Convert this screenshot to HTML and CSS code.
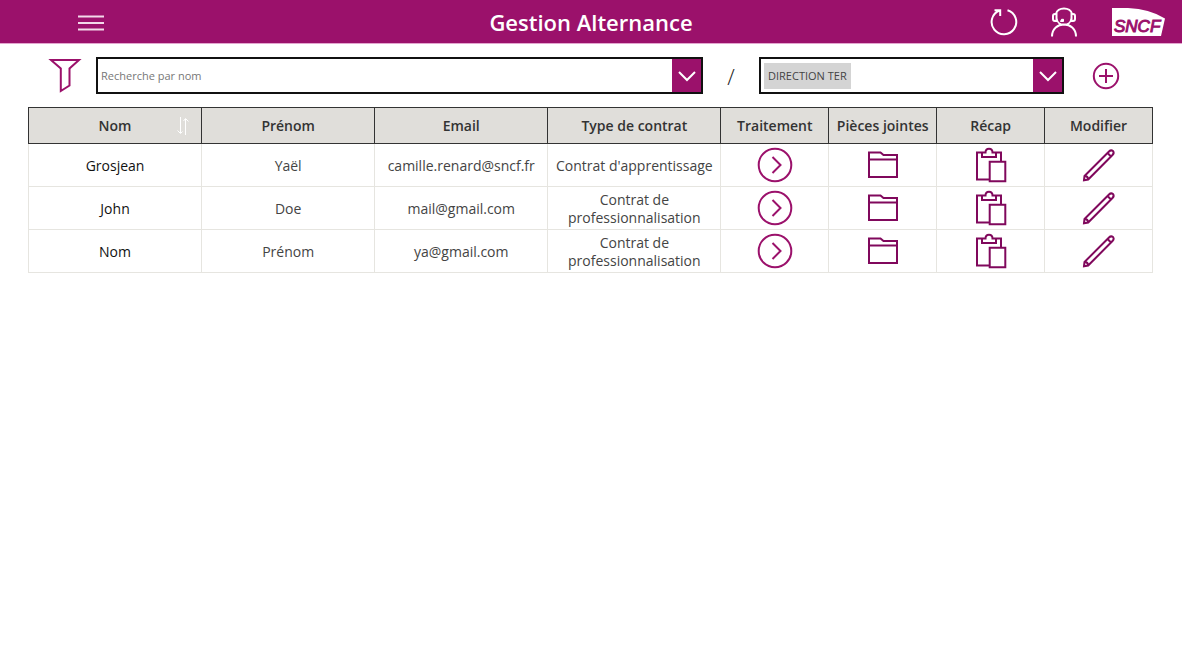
FILE: index.html
```html
<!DOCTYPE html>
<html lang="fr">
<head>
<meta charset="utf-8">
<meta name="viewport" content="width=device-width, initial-scale=1">
<title>Gestion Alternance</title>
<link rel="stylesheet" href="styles.css">
</head>
<body>
<svg class="sprite" aria-hidden="true">
  <symbol id="i-next" viewBox="0 0 36 36"><circle cx="18" cy="18" r="16.3"/><path d="M15.500 10l8 8-8 8"/></symbol>
  <symbol id="i-folder" viewBox="0 0 32 28"><path d="M2 26V1.500H13.500L16.500 4H30V26ZM2 8.500H30"/></symbol>
  <symbol id="i-recap" viewBox="0 0 32 36"><path d="M14.500 32.500H2V5.500H7M21 5.500H26V14.500M7 5.500V10H21V5.500H17.500C17.500 .5 10.500 .5 10.500 5.500ZM14.700 14.700H30.300V34.300H14.700Z"/></symbol>
  <symbol id="i-edit" viewBox="0 0 34 34"><path d="M2 32.200L2.500 28 27 3.500Q29 1.500 31 3 32.500 5 30.500 7L6.200 31.500ZM2.500 28Q6 28 6.200 31.500M25.500 5L29 8.500"/></symbol>
</svg>

<header class="topbar">
  <div class="topbar-start">
    <button class="icon-btn" type="button" aria-label="Menu">
      <svg class="bars" width="26" height="16" viewBox="0 0 26 16"><path d="M0 1.500H26M0 8H26M0 14.500H26"/></svg>
    </button>
  </div>
  <h1 class="title">Gestion Alternance</h1>
  <div class="topbar-end">
    <button class="icon-btn" type="button" aria-label="Actualiser">
      <svg width="28" height="28" viewBox="0 0 28 28"><path d="M17.500 2.200A12.300 12.300 0 1 1 9.500 2.500M4.500 2.300H10.200V8"/></svg>
    </button>
    <button class="icon-btn" type="button" aria-label="Assistance">
      <svg width="28" height="30" viewBox="0 0 28 30"><path d="M2 29.500C2 13.500 26 13.500 26 29.500M6.500 7H5Q3 7 3 9V12Q3 14 5 14H6.500ZM21.500 7H23Q25 7 25 9V12Q25 14 23 14H21.500ZM6 7C7-.5 21-.5 22 7M6.500 11C7.500 20 20.500 20 21.500 11"/><path class="solid" d="M10.500 14.500L11.500 12.300H13.500V14.500Z"/></svg>
    </button>
    <svg class="logo" width="53" height="28" viewBox="0 0 53 28" role="img" aria-label="SNCF"><path class="logo-plate" d="M0 0H16Q38 1 53 10.500L49 28H0Z"/><text class="logo-text" x="2" y="24">SNCF</text></svg>
  </div>
</header>

<main>
  <form class="toolbar">
    <svg class="funnel" width="34" height="36" viewBox="0 0 34 36" aria-hidden="true"><path d="M3 2H31L21.500 10.500V27.500L12.800 33V10.500Z"/></svg>
    <div class="combo combo-search">
      <input class="field" type="text" placeholder="Recherche par nom" aria-label="Recherche par nom">
      <button class="arrow" type="button" aria-label="Ouvrir la liste des noms"><svg width="20" height="12" viewBox="0 0 20 12"><path d="M2 2L10 10 18 2"/></svg></button>
    </div>
    <span class="slash">/</span>
    <div class="combo combo-direction">
      <select class="field direction" aria-label="Direction"><option>DIRECTION TER</option></select>
      <span class="arrow"><svg width="20" height="12" viewBox="0 0 20 12"><path d="M2 2L10 10 18 2"/></svg></span>
    </div>
    <button class="icon-btn add" type="button" aria-label="Ajouter">
      <svg width="28" height="28" viewBox="0 0 28 28"><circle cx="14" cy="14" r="12.200"/><path d="M14 7V21M7 14H21"/></svg>
    </button>
  </form>

  <table class="grid">
    <colgroup><col class="wide" span="4"><col class="narrow" span="4"></colgroup>
    <thead>
      <tr>
        <th scope="col"><div class="sortable"><span>Nom</span><button class="icon-btn sort" type="button" aria-label="Trier par nom"><svg width="12" height="18" viewBox="0 0 12 18"><path d="M3.500 0V16M.5 13.500L3.500 16.500 5.500 14.500M8.500 18V2M6.500 4L8.500 1.500 11.500 4.500"/></svg></button></div></th>
        <th scope="col">Prénom</th>
        <th scope="col">Email</th>
        <th scope="col">Type de contrat</th>
        <th scope="col">Traitement</th>
        <th scope="col">Pièces jointes</th>
        <th scope="col">Récap</th>
        <th scope="col">Modifier</th>
      </tr>
    </thead>
    <tbody>
      <tr>
        <td class="name">Grosjean</td><td>Yaël</td><td>camille.renard@sncf.fr</td><td>Contrat d'apprentissage</td>
        <td class="action"><button class="icon-btn" type="button" aria-label="Traitement de Grosjean"><svg width="36" height="36"><use href="#i-next"/></svg></button></td>
        <td class="action"><button class="icon-btn deep" type="button" aria-label="Pièces jointes de Grosjean"><svg width="32" height="28"><use href="#i-folder"/></svg></button></td>
        <td class="action"><button class="icon-btn deep" type="button" aria-label="Récap de Grosjean"><svg width="32" height="36"><use href="#i-recap"/></svg></button></td>
        <td class="action"><button class="icon-btn deep" type="button" aria-label="Modifier Grosjean"><svg width="34" height="34"><use href="#i-edit"/></svg></button></td>
      </tr>
      <tr>
        <td class="name">John</td><td>Doe</td><td>mail@gmail.com</td><td>Contrat de professionnalisation</td>
        <td class="action"><button class="icon-btn" type="button" aria-label="Traitement de John"><svg width="36" height="36"><use href="#i-next"/></svg></button></td>
        <td class="action"><button class="icon-btn deep" type="button" aria-label="Pièces jointes de John"><svg width="32" height="28"><use href="#i-folder"/></svg></button></td>
        <td class="action"><button class="icon-btn deep" type="button" aria-label="Récap de John"><svg width="32" height="36"><use href="#i-recap"/></svg></button></td>
        <td class="action"><button class="icon-btn deep" type="button" aria-label="Modifier John"><svg width="34" height="34"><use href="#i-edit"/></svg></button></td>
      </tr>
      <tr>
        <td class="name">Nom</td><td>Prénom</td><td>ya@gmail.com</td><td>Contrat de professionnalisation</td>
        <td class="action"><button class="icon-btn" type="button" aria-label="Traitement de Nom"><svg width="36" height="36"><use href="#i-next"/></svg></button></td>
        <td class="action"><button class="icon-btn deep" type="button" aria-label="Pièces jointes de Nom"><svg width="32" height="28"><use href="#i-folder"/></svg></button></td>
        <td class="action"><button class="icon-btn deep" type="button" aria-label="Récap de Nom"><svg width="32" height="36"><use href="#i-recap"/></svg></button></td>
        <td class="action"><button class="icon-btn deep" type="button" aria-label="Modifier Nom"><svg width="34" height="34"><use href="#i-edit"/></svg></button></td>
      </tr>
    </tbody>
  </table>
</main>
</body>
</html>
```
FILE: styles.css
```css
:root {
  --brand: #9b116b;
  --deep: #80085c;
  --head: #e0deda;
  --line: #e6e5e0;
}

* { box-sizing: border-box; }

body {
  margin: 0;
  background: #fff;
  color: #444;
  font-family: "Open Sans", "Noto Sans", sans-serif;
  font-size: 14px;
}

svg { display: block; fill: none; stroke: currentColor; stroke-width: 2px; }
.sprite { display: none; }

.icon-btn {
  display: inline-flex;
  padding: 0;
  border: 0;
  background: none;
  color: var(--brand);
  cursor: pointer;
}
.deep { color: var(--deep); }

/* Top bar */
.topbar {
  display: grid;
  grid-template-columns: 1fr auto 1fr;
  align-items: center;
  height: 44px;
  padding: 0 17px;
  border-bottom: 1px solid #e3a5cf;
  background: var(--brand);
}
.topbar .icon-btn { color: #fff; }
.topbar-start { display: flex; padding: 2px 0 0 61px; }
.topbar-end { display: flex; justify-content: flex-end; align-items: center; gap: 32px; }
.logo { margin-left: 2px; }
.bars { stroke: #f3d9ea; }
.title { margin: 0; color: #fff; font-size: 22px; font-weight: 600; line-height: 32px; }
.solid { fill: currentColor; stroke-width: 1px; }
.logo-plate { fill: #fff; stroke: none; }
.logo-text {
  fill: var(--brand);
  stroke: var(--brand);
  stroke-width: 1px;
  font-family: "Liberation Sans", Arial, sans-serif;
  font-size: 17px;
  font-style: italic;
}

/* Filters */
.toolbar {
  display: flex;
  align-items: center;
  padding: 13px 62px 13px 48px;
}
.funnel { flex: none; margin-right: 14px; color: var(--brand); }
.combo {
  display: grid;
  grid-template-columns: 1fr 29px;
  height: 37px;
  border: 2px solid #111;
  background: #fff;
}
.combo-search { flex: 603 1 0; }
.combo-direction { flex: 301 1 0; }
.field {
  grid-area: 1 / 1;
  min-width: 0;
  margin: 0;
  padding: 0 3px;
  border: 0;
  background: none;
  color: #444;
  font: 11px "Open Sans", "Noto Sans", sans-serif;
}
.field::placeholder { color: #777; opacity: 1; }
.direction {
  grid-area: 1 / 1 / 2 / 3;
  appearance: none;
  padding-left: 7px;
  background: linear-gradient(#d4d4d4, #d4d4d4) 3px center / 87px 26px no-repeat;
}
.arrow {
  grid-area: 1 / 2;
  display: flex;
  align-items: center;
  justify-content: center;
  padding: 0;
  border: 0;
  background: var(--brand);
  color: #fff;
}
span.arrow { pointer-events: none; }
.slash { flex: 0 0 56px; color: #222; font-size: 22px; font-weight: 300; line-height: 32px; text-align: center; }
.add { margin-left: 28px; }

/* Table */
.grid {
  width: calc(100% - 57px);
  margin: 0 29px 0 28px;
  border-collapse: collapse;
  table-layout: fixed;
}
.wide { width: 15.4%; }
.narrow { width: 9.6%; }
.grid th {
  height: 36px;
  padding: 0;
  border: 1px solid #333;
  background: var(--head);
  color: #333;
  font-weight: 600;
  line-height: 18px;
}
.grid td {
  height: 43px;
  padding: 2px 0 0;
  border: 1px solid var(--line);
  line-height: 18px;
  text-align: center;
  vertical-align: middle;
}
.grid .action { padding: 0; }
.grid td .icon-btn { vertical-align: middle; }
.grid .name { color: #111; }
.sortable { display: grid; grid-template-columns: 1fr auto 1fr; align-items: center; }
.sortable span { grid-column: 2; }
.sort { justify-self: end; margin-right: 12px; color: #fff; }
.sort svg { stroke-width: 1px; }
```
